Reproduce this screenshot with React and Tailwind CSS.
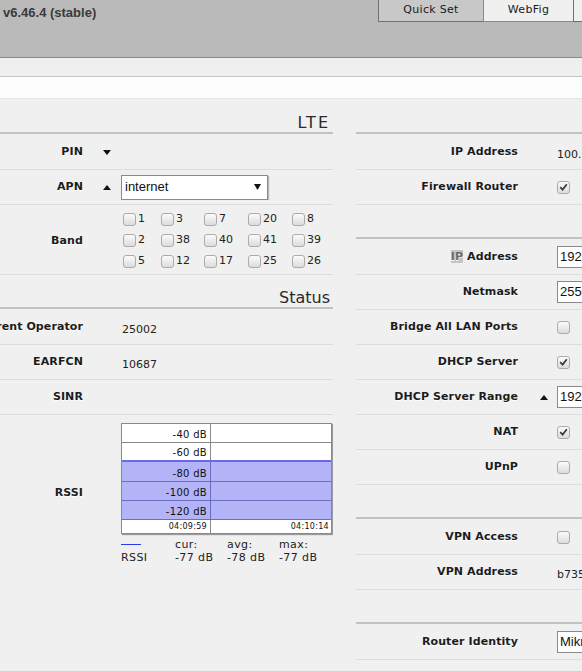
const LABEL = "font-['DejaVu_Sans',sans-serif] font-bold text-[11px] tracking-[0.1px] text-[#1c1c1c] [text-shadow:0_1px_0_#ffffff]";
const VALUE = "font-['DejaVu_Sans',sans-serif] text-[11px] text-[#222]";

function Down() {
  return (
    <svg width="8" height="5" viewBox="0 0 8 5">
      <polygon points="0,0 8,0 4,5" fill="#111" />
    </svg>
  );
}

function Up() {
  return (
    <svg width="8" height="5" viewBox="0 0 8 5">
      <polygon points="0,5 8,5 4,0" fill="#111" />
    </svg>
  );
}

function Box({ checked }) {
  return (
    <span className="inline-flex items-center justify-center w-[13px] h-[13px] shrink-0 rounded-[3px] border border-[#ababab] bg-linear-to-b from-[#fbfbfb] to-[#dcdcdc]">
      {checked && (
        <svg width="9" height="8" viewBox="0 0 9 8">
          <path d="M1.2 4.2 L3.6 6.6 L7.8 1.2" stroke="#3a3a3a" strokeWidth="1.7" fill="none" />
        </svg>
      )}
    </span>
  );
}

function Input({ value }) {
  return (
    <div className="w-[120px] h-[22px] border border-[#8a8a8a] bg-white shadow-[1px_1px_1px_rgba(0,0,0,0.25)] flex items-center pl-[2px] font-['Liberation_Sans',sans-serif] text-[13px] text-[#111]">
      {value}
    </div>
  );
}

function Row({ label, arrow, children, h = 'h-[35px]', border = true, right }) {
  return (
    <div className={`flex items-center ${h} ${border ? 'border-b border-[#dcdcdc]' : ''}`}>
      <div className={`w-[162px] shrink-0 flex justify-end whitespace-nowrap ${LABEL}`}>{label}</div>
      <div className={`${right ? 'w-[39px] pl-[22px]' : 'w-[38px] pl-[20px]'} shrink-0 flex items-center`}>{arrow}</div>
      <div className="flex-1 min-w-0 whitespace-nowrap overflow-hidden">{children}</div>
    </div>
  );
}

function Section({ title, h = 'h-[32px]', wide }) {
  return (
    <>
      <div className={`${h} flex items-end justify-end pr-[3px] font-['DejaVu_Sans',sans-serif] text-[16px] leading-[19px] text-[#2a2a2a] ${wide ? 'tracking-[2px]' : ''}`}>
        {title}
      </div>
      <div className="h-[3px] border-t-2 border-[#c2c2c2]" />
    </>
  );
}

function ChartRow({ label, h, line, blue, small }) {
  return (
    <div className={`flex ${h} ${line || ''}`}>
      <div className={`w-[89px] shrink-0 border-r ${blue ? 'border-[#6c6cc0]' : 'border-[#8a8a8a]'} flex items-end justify-end pr-[3px] pb-[1px] ${small ? 'text-[8px] leading-[10px]' : 'leading-[12px]'}`}>
        {label}
      </div>
      <div className={`flex-1 flex items-end justify-end pr-[2px] pb-[1px] ${small ? 'text-[8px] leading-[10px]' : ''}`}>
        {small ? '04:10:14' : ''}
      </div>
    </div>
  );
}

function Chart() {
  return (
    <div className="w-[211px] border border-[#8a8a8a] bg-white shadow-[1px_1px_1px_#9a9a9a] font-['DejaVu_Sans',sans-serif] text-[10px] tracking-[0.3px] text-[#111]">
      <ChartRow label="-40 dB" h="h-[19px]" line="border-b border-[#8a8a8a]" />
      <ChartRow label="-60 dB" h="h-[17px]" />
      <div className="border-t-2 border-[#6a6ae6] bg-[#b3b3f8]">
        <ChartRow label="-80 dB" h="h-[20px]" line="border-b border-[#6c6cc0]" blue />
        <ChartRow label="-100 dB" h="h-[19px]" line="border-b border-[#6c6cc0]" blue />
        <ChartRow label="-120 dB" h="h-[19px]" line="border-b border-[#6c6cc0]" blue />
      </div>
      <ChartRow label="04:09:59" h="h-[13px]" small />
    </div>
  );
}

const bands = ['1', '3', '7', '20', '8', '2', '38', '40', '41', '39', '5', '12', '17', '25', '26'];

export default function App() {
  return (
    <div className="w-full min-h-screen overflow-hidden bg-[#f0f0f0]">
      <div className="h-[58px] bg-[#bababa] border-b border-[#888888] flex items-start overflow-hidden">
        <div className="w-[378px] shrink-0 pl-[3px] pt-[5px] leading-[16px] font-['Liberation_Sans',sans-serif] font-bold text-[13px] text-[#3a3a3a]">
          v6.46.4 (stable)
        </div>
        <div className="flex shrink-0 font-['DejaVu_Sans',sans-serif] text-[11px] tracking-[0.3px] text-[#1a1a1a]">
          <div className="w-[105px] h-[22px] border-l border-b border-[#707070] bg-[#c8c8c8] flex items-center justify-center">Quick Set</div>
          <div className="w-[90px] h-[22px] border-l border-b border-[#8a8a8a] bg-[#f0f0f0] flex items-center justify-center">WebFig</div>
          <div className="w-[100px] h-[22px] border-l border-b border-[#707070] bg-[#f0f0f0]" />
        </div>
      </div>
      <div className="h-[19px] bg-[#efefef] border-b border-[#c4c4c4]" />
      <div className="h-[22px] bg-[#fdfdfd] border-b border-[#e4e4e4]" />

      <div className="flex ml-[-79px] gap-[23px]">
        <div className="w-[412px] shrink-0">
          <Section title="LTE" h="h-[33px]" wide />
          <Row label="PIN" arrow={<Down />} />
          <Row label="APN" arrow={<Up />}>
            <div className="w-[147px] h-[25px] border border-[#8a8a8a] bg-white shadow-[1px_1px_1px_rgba(0,0,0,0.25)] flex items-center pl-[3px] pr-[6px] font-['Liberation_Sans',sans-serif] text-[13px] text-[#111]">
              internet
              <svg className="ml-auto" width="7" height="6" viewBox="0 0 7 6">
                <polygon points="0,0 7,0 3.5,6" fill="#111" />
              </svg>
            </div>
          </Row>
          <Row label={<span className="pt-[3px]">Band</span>} h="h-[70px]">
            <div className="grid grid-cols-[38px_43px_44px_44px_40px] pt-[1px] pl-[2px]">
              {bands.map((b) => (
                <div key={b} className={`h-[21px] flex items-center gap-[2px] ${VALUE}`}>
                  <Box />
                  {b}
                </div>
              ))}
            </div>
          </Row>
          <Section title="Status" />
          <Row label="Current Operator">
            <span className={`pl-[1px] ${VALUE}`}>25002</span>
          </Row>
          <Row label="EARFCN">
            <span className={`pl-[1px] ${VALUE}`}>10687</span>
          </Row>
          <Row label="SINR" />
          <Row label="RSSI" h="h-[156px]" border={false}>
            <Chart />
            <div className={`mt-[4px] grid grid-cols-[54px_52px_52px_50px] leading-[13px] tracking-[0.4px] ${VALUE}`}>
              <div className="h-[13px] flex items-center">
                <div className="w-[20px] h-px bg-[#2a3cf0]" />
              </div>
              <div>cur:</div>
              <div>avg:</div>
              <div>max:</div>
              <div>RSSI</div>
              <div>-77 dB</div>
              <div>-78 dB</div>
              <div>-77 dB</div>
            </div>
          </Row>
        </div>

        <div className="w-[412px] shrink-0">
          <Section title="" h="h-[33px]" />
          <Row right label="IP Address">
            <span className={VALUE}>100.64.12.7</span>
          </Row>
          <Row right label="Firewall Router">
            <div className="flex items-center"><Box checked /></div>
          </Row>
          <Section title="" />
          <Row
            right
            label={
              <span>
                <span className="bg-[#c4c4c4] text-[#6a6a6a]">IP</span> Address
              </span>
            }
          >
            <Input value="192.168.88.1" />
          </Row>
          <Row right label="Netmask">
            <Input value="255.255.255.0" />
          </Row>
          <Row right label="Bridge All LAN Ports">
            <div className="flex items-center"><Box /></div>
          </Row>
          <Row right label="DHCP Server">
            <div className="flex items-center"><Box checked /></div>
          </Row>
          <Row right label="DHCP Server Range" arrow={<Up />}>
            <Input value="192.168.88.10-192.168.88.254" />
          </Row>
          <Row right label="NAT">
            <div className="flex items-center"><Box checked /></div>
          </Row>
          <Row right label="UPnP">
            <div className="flex items-center"><Box /></div>
          </Row>
          <Section title="" />
          <Row right label="VPN Access">
            <div className="flex items-center"><Box /></div>
          </Row>
          <Row right label="VPN Address">
            <span className={VALUE}>b735089f2e.sn.mynetname.net</span>
          </Row>
          <Section title="" />
          <Row right label="Router Identity">
            <Input value="MikroTik" />
          </Row>
        </div>
      </div>
    </div>
  );
}
